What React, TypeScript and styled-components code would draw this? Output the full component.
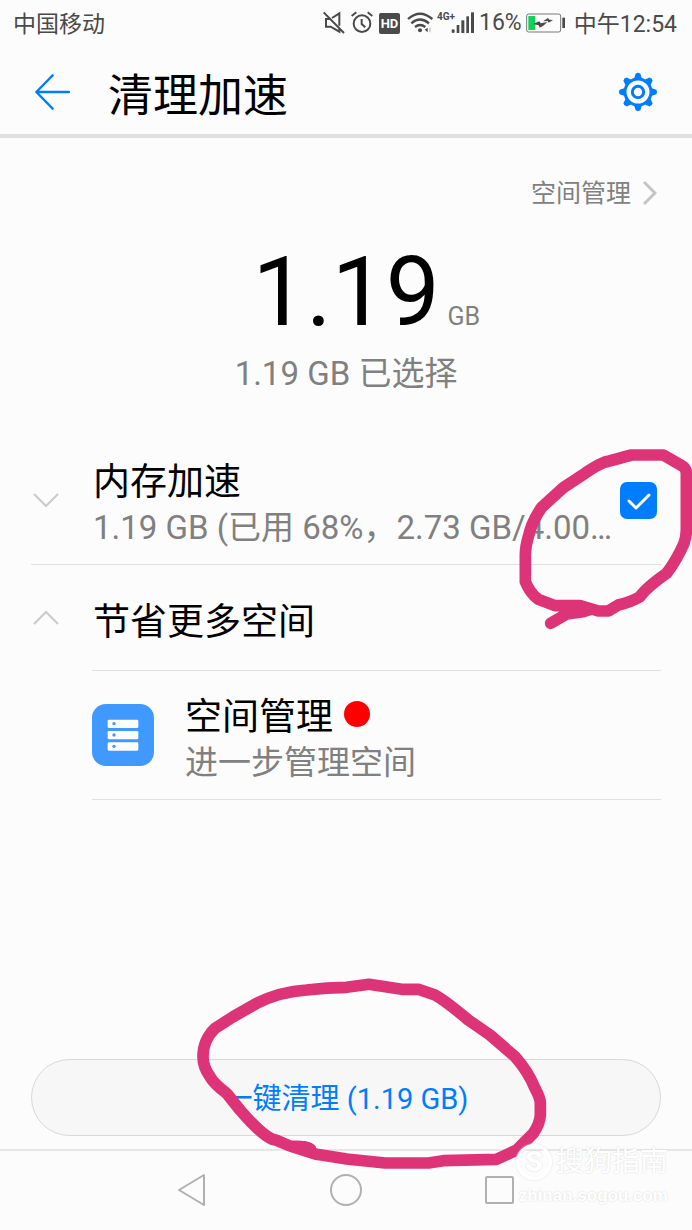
import React, { useState } from "react";
import styled, { createGlobalStyle } from "styled-components";

const GlobalStyle = createGlobalStyle`
  *, *::before, *::after { box-sizing: border-box; }
  body {
    margin: 0;
    background: #fcfcfc;
    color: #000;
    font-family: Roboto, "Noto Sans CJK SC", sans-serif;
  }
  h1, h2, h3, p { margin: 0; font-weight: 400; }
  button { border: 0; padding: 0; background: none; font: inherit; cursor: pointer; }
  svg { display: block; flex: none; }
`;

const blue = "#007dff";
const grey = "#808080";
const pink = "#dd3377";
const dark = "#4a4a4a";

const Page = styled.div`
  position: relative;
  display: flex;
  flex-direction: column;
  min-height: 100vh;
  overflow: hidden;
`;

const StatusBar = styled.div`
  display: flex;
  align-items: center;
  justify-content: space-between;
  height: 46px;
  padding: 0 15px 0 13px;
  font-size: 23px;
  line-height: 28px;
  color: ${dark};
`;

const Carrier = styled.span`
  padding-top: 4px;
`;

const StatusGroup = styled.div`
  display: flex;
  align-items: center;
  gap: 4px;
`;

const HdBadge = styled.span`
  width: 21px;
  height: 21px;
  margin: 0 3px 0 1px;
  border-radius: 2px;
  background: ${dark};
  color: #fcfcfc;
  font-size: 13px;
  font-weight: 700;
  line-height: 21px;
  text-align: center;
`;

const Network = styled.span`
  display: flex;
  align-items: flex-start;
  font-size: 10px;
  font-weight: 700;
  line-height: 12px;

  svg { margin-left: -4px; }
`;

const Clock = styled.time`
  margin-left: 4px;
  padding-top: 4px;
`;

const Header = styled.header`
  display: flex;
  align-items: center;
  height: 92px;
  padding: 4px 34px 0;
  border-bottom: 4px solid #e0e0e0;
`;

const Title = styled.h1`
  flex: 1;
  padding: 10px 0 0 38px;
  font-size: 45px;
  line-height: 60px;
`;

const ManageLink = styled.a`
  display: flex;
  align-items: center;
  align-self: flex-end;
  gap: 12px;
  margin: 36px 35px 0 0;
  font-size: 25px;
  line-height: 34px;
  color: ${grey};
  text-decoration: none;

  span { padding-top: 3px; }
`;

const Total = styled.div`
  display: grid;
  grid-template-columns: 1fr auto 1fr;
  align-items: baseline;
  margin-top: 33px;
  font-size: 96px;
  line-height: 96px;
`;

const Unit = styled.span`
  padding-left: 8px;
  font-size: 25px;
  line-height: 32px;
  color: ${grey};
`;

const Selected = styled.p`
  margin-top: 14px;
  font-size: 33px;
  line-height: 40px;
  color: ${grey};
  text-align: center;
`;

const List = styled.main`
  margin: 42px 31px 0;
`;

const Row = styled.section<{ $height: number; $line?: boolean }>`
  display: flex;
  align-items: center;
  height: ${(p) => p.$height}px;
  border-bottom: ${(p) => (p.$line ? "1px solid #e0e0e0" : "0")};
`;

const SubList = styled.div`
  margin-left: 61px;
  border-top: 1px solid #e0e0e0;
`;

const Toggle = styled.button`
  display: flex;
  align-items: center;
  flex: none;
  width: 62px;
  height: 48px;
  padding-left: 2px;
`;

const RowText = styled.div`
  flex: 1;
  min-width: 0;
  padding-top: 10px;
`;

const RowTitle = styled.h2`
  display: flex;
  align-items: center;
  gap: 11px;
  font-size: 37px;
  line-height: 46px;
`;

const SectionTitle = styled(RowTitle)`
  padding-top: 10px;
`;

const RowNote = styled.p`
  font-size: 33px;
  line-height: 44px;
  color: ${grey};
  white-space: nowrap;
`;

const RedDot = styled.span`
  width: 26px;
  height: 26px;
  margin-bottom: 8px;
  border-radius: 50%;
  background: #ff0000;
`;

const AppTile = styled.div`
  display: flex;
  align-items: center;
  justify-content: center;
  flex: none;
  width: 62px;
  height: 62px;
  margin-right: 31px;
  border-radius: 14px;
  background: #4099ff;
`;

const CheckWrap = styled.div`
  position: relative;
  flex: none;
  width: 37px;
  height: 37px;
  margin: 0 4px;
`;

const CheckBox = styled.input`
  appearance: none;
  display: block;
  width: 37px;
  height: 37px;
  margin: 0;
  border: 2px solid ${blue};
  border-radius: 7px;
  cursor: pointer;
  &:checked { background: ${blue}; }
`;

const CheckMark = styled.svg`
  position: absolute;
  inset: 0;
  pointer-events: none;
`;

const Scribble = styled.svg<{ $left: string; $top: number }>`
  position: absolute;
  left: ${(p) => p.$left};
  top: ${(p) => p.$top}px;
  z-index: 1;
  pointer-events: none;
  fill: none;
  stroke: ${pink};
  stroke-width: 35;
  stroke-linecap: round;
  stroke-linejoin: round;
`;

const Action = styled.div`
  position: relative;
  margin: auto 31px 13px;
`;

const CleanButton = styled.button`
  display: block;
  width: 100%;
  height: 77px;
  padding-top: 3px;
  border: 1px solid #d8d8d8;
  border-radius: 39px;
  background: #f7f7f7;
  color: ${blue};
  font-size: 29px;
  line-height: 40px;
`;

const NavBar = styled.nav`
  display: flex;
  align-items: center;
  justify-content: center;
  gap: 122px;
  height: 81px;
  padding-bottom: 2px;
  border-top: 2px solid #e6e6e6;
`;

const Watermark = styled.div`
  position: absolute;
  right: 24px;
  bottom: 22px;
  z-index: 2;
  display: flex;
  flex-direction: column;
  align-items: flex-end;
  color: #fff;
  text-shadow: 0 0 2px #d4d4d4;
  pointer-events: none;
`;

const WatermarkBrand = styled.div`
  display: flex;
  align-items: center;
  gap: 4px;
  font-size: 28px;
  line-height: 44px;
`;

const WatermarkLogo = styled.span`
  width: 36px;
  height: 36px;
  border: 3px solid #fff;
  border-radius: 50%;
  box-shadow: 0 0 2px #d4d4d4;
  font-size: 28px;
  font-weight: 900;
  line-height: 30px;
  text-align: center;
`;

const WatermarkSite = styled.div`
  font-family: "Liberation Sans", sans-serif;
  font-size: 17px;
  font-weight: 700;
  line-height: 24px;
`;

const MuteIcon = () => (
  <svg width="24" height="24" viewBox="36 36 72 72" fill="none" stroke={dark} strokeWidth="6">
    <path d="M41 40 102 102M66 57 88 43V80M60 60H48V83H62L88 98V90" />
  </svg>
);

const AlarmIcon = () => (
  <svg width="24" height="24" viewBox="119 36 72 72" fill="none" stroke={dark} strokeWidth="6">
    <circle cx="155" cy="74" r="25" />
    <path d="M154 60V75L165 85M124 51 138 40M172 40 186 51" />
  </svg>
);

const WifiIcon = () => (
  <svg width="26" height="24" viewBox="290 34 78 72" fill="none" stroke={dark} strokeWidth="7">
    <path d="M293 58Q329 26 366 58M303 71Q329 48 356 71M314 82Q329 70 345 82" />
    <circle cx="329" cy="92" r="6" fill={dark} stroke="none" />
    <path d="M343 90 352 84V98Z" fill={dark} stroke="none" />
    <path d="M359 84V98" stroke="#c4c4c4" strokeWidth="4" />
  </svg>
);

const SignalIcon = () => (
  <svg width="24" height="24" viewBox="428 34 72 72" fill={dark}>
    <rect x="430" y="89" width="9" height="11" rx="4" />
    <rect x="445" y="76" width="8" height="24" />
    <rect x="459" y="62" width="9" height="38" />
    <rect x="474" y="50" width="8" height="50" />
    <rect x="488" y="38" width="9" height="62" />
  </svg>
);

const BatteryIcon = () => (
  <svg width="40" height="20" viewBox="143 38 120 60">
    <rect x="145" y="41" width="102" height="54" rx="6" fill="none" stroke="#777" strokeWidth="3" />
    <rect x="150" y="47" width="21" height="42" fill="#14cf5c" />
    <rect x="252" y="52" width="8" height="31" fill={dark} />
    <path d="M164 71 183 63 187 69 207 65 195 76 184 82 181 75ZM194 63 209 53 213 58 224 59 211 67 208 62Z" fill={dark} />
  </svg>
);

const BackIcon = () => (
  <svg width="36" height="36" viewBox="106 72 108 108" fill="none" stroke={blue} strokeWidth="7" strokeLinecap="round" strokeLinejoin="round">
    <path d="M113 126H211M162 76 113 126 162 176" />
  </svg>
);

const GearIcon = () => (
  <svg width="40" height="40" viewBox="-60 -60 120 120" fill="none" stroke={blue} strokeWidth="9">
    <circle r="39" />
    <circle r="17" />
    {[0, 45, 90, 135, 180, 225, 270, 315].map((a) => (
      <path key={a} transform={`rotate(${a})`} d="M-12 -40 -7 -55Q0 -60 7 -55L12 -40Z" fill={blue} stroke="none" />
    ))}
  </svg>
);

const Chevron = ({ up }: { up?: boolean }) => (
  <svg width="26" height="16" viewBox="0 0 26 16" fill="none" stroke="#cacaca" strokeWidth="2">
    <path d={up ? "M1 14 13 2 25 14" : "M1 2 13 14 25 2"} />
  </svg>
);

const StorageIcon = () => (
  <svg width="32" height="32" viewBox="0 0 96 96">
    {[2, 36, 70].map((y) => (
      <g key={y}>
        <rect x="2" y={y} width="92" height="25" rx="4" fill="#fff" />
        <circle cx="21" cy={y + 12} r="5" fill="#4099ff" />
      </g>
    ))}
  </svg>
);

export default function App() {
  const [checked, setChecked] = useState(true);
  return (
    <Page>
      <GlobalStyle />
      <StatusBar>
        <Carrier>中国移动</Carrier>
        <StatusGroup>
          <MuteIcon />
          <AlarmIcon />
          <HdBadge>HD</HdBadge>
          <WifiIcon />
          <Network>
            4G+
            <SignalIcon />
          </Network>
          <span>16%</span>
          <BatteryIcon />
          <Clock>中午12:54</Clock>
        </StatusGroup>
      </StatusBar>

      <Header>
        <button aria-label="返回"><BackIcon /></button>
        <Title>清理加速</Title>
        <button aria-label="设置"><GearIcon /></button>
      </Header>

      <ManageLink href="#storage">
        <span>空间管理</span>
        <svg width="14" height="26" viewBox="0 0 14 26" fill="none" stroke="#c4c4c4" strokeWidth="3">
          <path d="M1 2 12 13 1 24" />
        </svg>
      </ManageLink>

      <Total>
        <span />
        <span>1.19</span>
        <Unit>GB</Unit>
      </Total>
      <Selected>1.19 GB 已选择</Selected>

      <List>
        <Row $height={129} $line>
          <Toggle aria-label="展开"><Chevron /></Toggle>
          <RowText>
            <RowTitle as="label" htmlFor="memory">内存加速</RowTitle>
            <RowNote>1.19 GB (已用 68%，2.73 GB/4.00…</RowNote>
          </RowText>
          <CheckWrap>
            <CheckBox id="memory" type="checkbox" checked={checked} onChange={(e) => setChecked(e.target.checked)} />
            <CheckMark width="37" height="37" viewBox="0 0 37 37" fill="none" stroke="#fff" strokeWidth="3" strokeLinecap="round" strokeLinejoin="round">
              <path d="M9 19 16 26 29 13" />
            </CheckMark>
            <Scribble $left="-120px" $top={-52} width="198" height="210" viewBox="0 0 594 630">
              <path d="M152 580 200 552 250 545 275 537 295 543H325L355 525Q395 515 420 500Q440 472 500 430Q530 390 552 340Q559 320 559 300V130Q558 112 545 107L490 75H395Q320 95 310 98Q290 105 255 130L190 173 125 232Q95 275 85 320Q76 350 76 375V455Q90 490 115 508L165 527H240L275 537" />
            </Scribble>
          </CheckWrap>
        </Row>

        <Row $height={105}>
          <Toggle aria-label="收起"><Chevron up /></Toggle>
          <SectionTitle>节省更多空间</SectionTitle>
        </Row>

        <SubList>
          <Row $height={129} $line>
            <AppTile><StorageIcon /></AppTile>
            <RowText>
              <RowTitle as="h3">空间管理<RedDot /></RowTitle>
              <RowNote>进一步管理空间</RowNote>
            </RowText>
          </Row>
        </SubList>
      </List>

      <Action>
        <CleanButton>一键清理 (1.19 GB)</CleanButton>
        <Scribble $left="calc(50% - 166px)" $top={-99} width="380" height="220" viewBox="0 0 1140 660">
          <path d="M392 568Q380 560 365 560L330 558 290 541 275 537Q240 520 180 450L140 400Q100 370 90 350Q69 320 69 290Q69 240 105 205L160 170 230 130Q300 95 380 90Q440 83 500 82L567 73 665 88H715L765 105Q800 125 865 180L930 225 1005 290Q1045 335 1065 385Q1081 415 1081 430V465Q1080 490 1060 520L1035 545 1010 570 950 598 790 602 745 609H615L500 597 410 583 330 558" />
        </Scribble>
      </Action>

      <NavBar>
        <button aria-label="后退">
          <svg width="32" height="34" viewBox="0 0 32 34" fill="none" stroke="#b0b0b0" strokeWidth="2" strokeLinejoin="round">
            <path d="M3 17 28 2V32Z" />
          </svg>
        </button>
        <button aria-label="主页">
          <svg width="32" height="34" viewBox="0 0 32 34" fill="none" stroke="#b0b0b0" strokeWidth="2">
            <circle cx="16" cy="17" r="15" />
          </svg>
        </button>
        <button aria-label="最近任务">
          <svg width="32" height="34" viewBox="0 0 32 34" fill="none" stroke="#b0b0b0" strokeWidth="2">
            <rect x="2" y="4" width="27" height="26" rx="1" />
          </svg>
        </button>
      </NavBar>

      <Watermark>
        <WatermarkBrand>
          <WatermarkLogo>S</WatermarkLogo>
          搜狗指南
        </WatermarkBrand>
        <WatermarkSite>zhinan.sogou.com</WatermarkSite>
      </Watermark>
    </Page>
  );
}
